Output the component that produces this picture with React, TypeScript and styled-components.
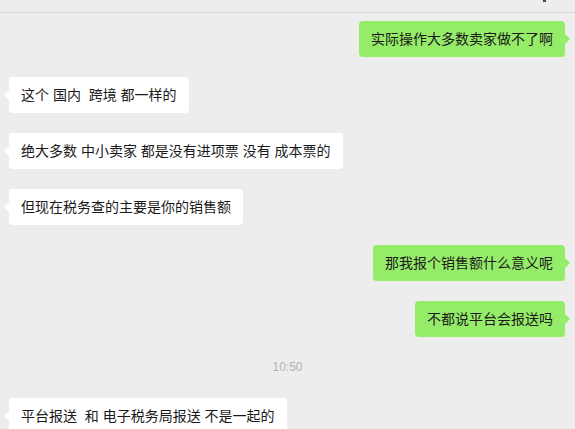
import styled, { createGlobalStyle } from "styled-components";

const GlobalStyle = createGlobalStyle`
  html, body {
    margin: 0;
    padding: 0;
    background: #ededed;
    overflow: hidden;
  }
  body {
    font-family: "Liberation Sans", "Noto Sans CJK SC", sans-serif;
  }
`;

const Window = styled.div`
  width: 575px;
  height: 429px;
  background: #ededed;
  display: flex;
  flex-direction: column;
  overflow: hidden;
`;

const TitleBar = styled.div`
  position: relative;
  height: 12px;
  flex-shrink: 0;
  border-bottom: 1px solid #d6d6d6;
`;

const MoreIconEdge = styled.span`
  position: absolute;
  left: 543px;
  top: 0;
  width: 3px;
  height: 2px;
  background: #4a4a4a;
`;

const MessageList = styled.div`
  display: flex;
  flex-direction: column;
  gap: 20px;
  padding: 8px 10px 0 9px;
`;

const Row = styled.div<{ $mine?: boolean }>`
  display: flex;
  justify-content: ${(p) => (p.$mine ? "flex-end" : "flex-start")};
`;

const Bubble = styled.div<{ $mine?: boolean }>`
  position: relative;
  padding: 8px 12px;
  font-size: 14px;
  line-height: 20px;
  color: #191919;
  border-radius: 4px;
  white-space: pre;
  background: ${(p) => (p.$mine ? "#95ec69" : "#ffffff")};

  &::before {
    content: "";
    position: absolute;
    top: 13px;
    ${(p) => (p.$mine ? "right: -5px;" : "left: -5px;")}
    border-top: 5px solid transparent;
    border-bottom: 5px solid transparent;
    ${(p) =>
      p.$mine
        ? "border-left: 5px solid #95ec69;"
        : "border-right: 5px solid #ffffff;"}
  }
`;

const TimeStamp = styled.div`
  text-align: center;
  font-size: 12px;
  line-height: 21px;
  color: #b2b2b2;
  margin-right: -1px;
`;

type Msg = { mine?: boolean; text?: string; time?: string };

const messages: Msg[] = [
  { mine: true, text: "实际操作大多数卖家做不了啊" },
  { text: "这个 国内  跨境 都一样的" },
  { text: "绝大多数 中小卖家 都是没有进项票 没有 成本票的" },
  { text: "但现在税务查的主要是你的销售额" },
  { mine: true, text: "那我报个销售额什么意义呢" },
  { mine: true, text: "不都说平台会报送吗" },
  { time: "10:50" },
  { text: "平台报送  和 电子税务局报送 不是一起的" },
];

const App = () => {
  return (
    <>
      <GlobalStyle />
      <Window>
        <TitleBar>
          <MoreIconEdge />
        </TitleBar>
        <MessageList>
          {messages.map((m, i) =>
            m.time ? (
              <TimeStamp key={i}>{m.time}</TimeStamp>
            ) : (
              <Row key={i} $mine={m.mine}>
                <Bubble $mine={m.mine}>{m.text}</Bubble>
              </Row>
            )
          )}
        </MessageList>
      </Window>
    </>
  );
};

export default App;
